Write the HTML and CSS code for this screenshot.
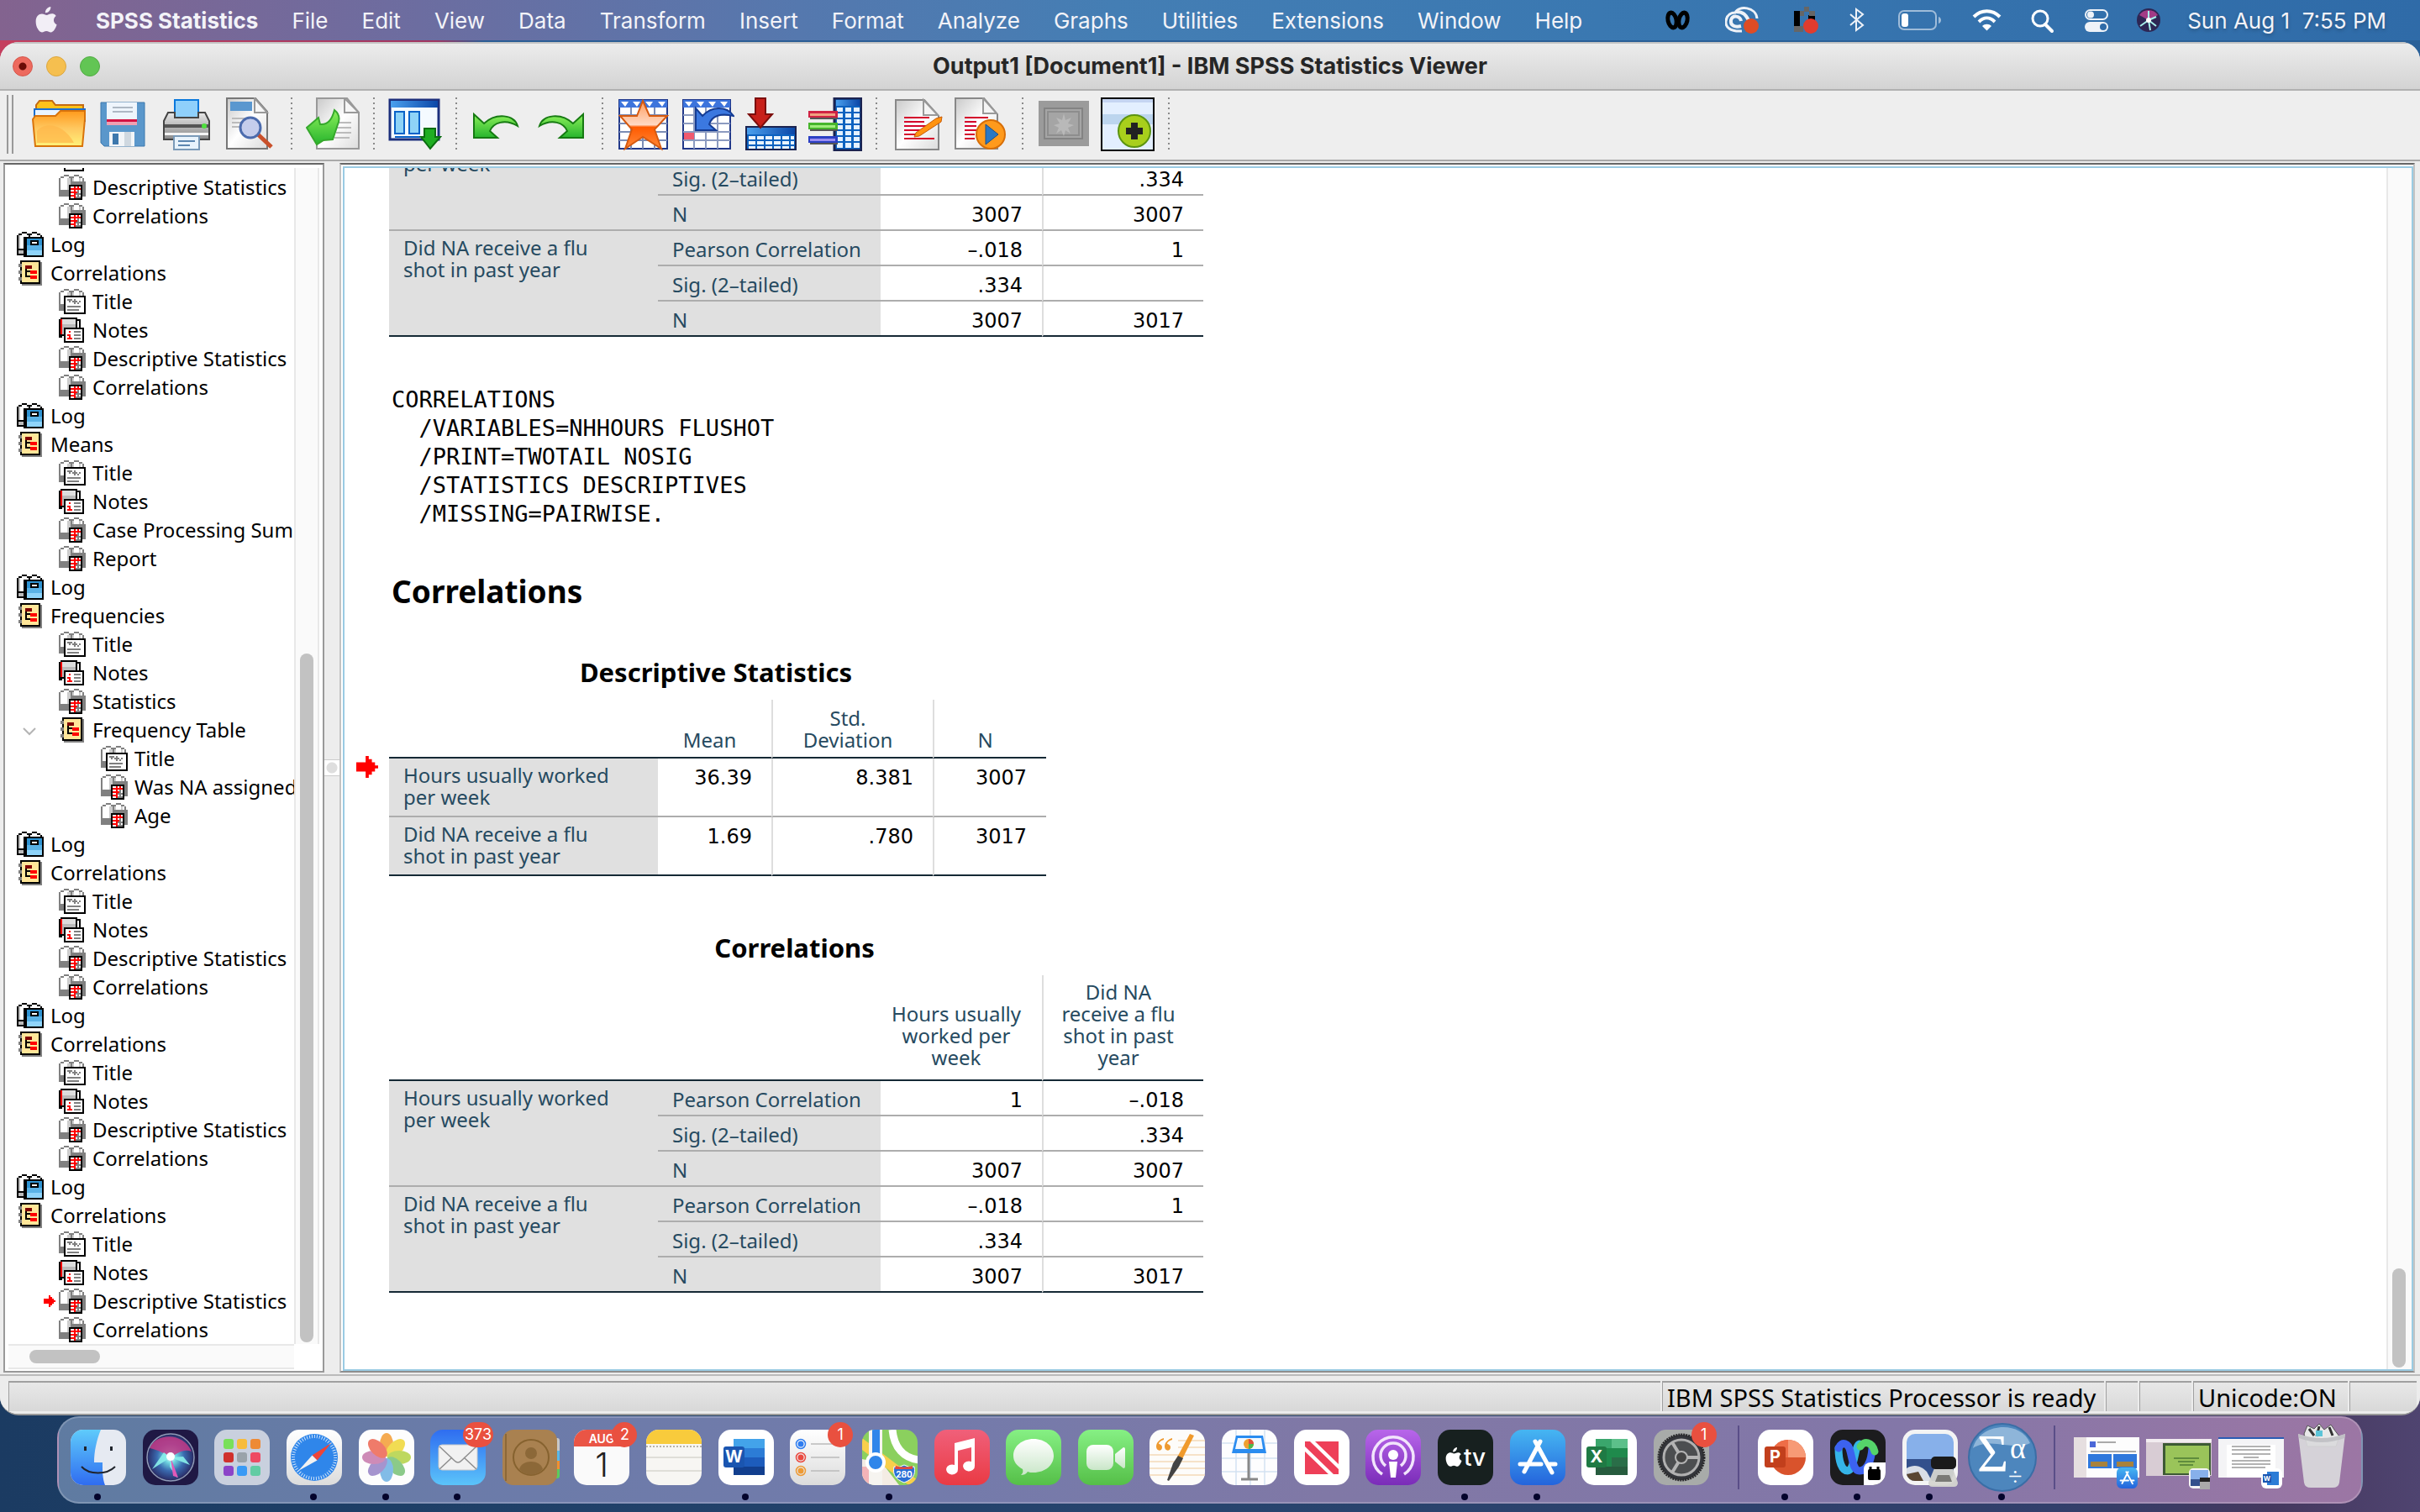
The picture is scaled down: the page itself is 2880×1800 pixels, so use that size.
FILE: index.html
```html
<!DOCTYPE html>
<html lang="en">
<head>
<meta charset="utf-8">
<title>Output1 [Document1] - IBM SPSS Statistics Viewer</title>
<link rel="stylesheet" href="styles.css">
</head>
<body>
<svg class="defs" aria-hidden="true">
  <defs>
    <linearGradient id="g-sheet" x1="0" y1="0" x2="1" y2="1"><stop offset="0" stop-color="#c9c9c9"/><stop offset=".5" stop-color="#fff"/><stop offset="1" stop-color="#dcdcdc"/></linearGradient>
    <linearGradient id="g-head" x1="0" x2="1"><stop offset="0" stop-color="#4aa0ee"/><stop offset="1" stop-color="#0b47a8"/></linearGradient>
    <linearGradient id="g-folder" x1="0" y1="0" x2="0" y2="1"><stop offset="0" stop-color="#ff9a1c"/><stop offset=".5" stop-color="#ffc860"/><stop offset="1" stop-color="#fff27a"/></linearGradient>
    <linearGradient id="g-green" x1="0" y1="0" x2="0" y2="1"><stop offset="0" stop-color="#8cf05a"/><stop offset="1" stop-color="#27b42d"/></linearGradient>
    <linearGradient id="g-gray" x1="0" y1="0" x2="0" y2="1"><stop offset="0" stop-color="#e8e8e8"/><stop offset="1" stop-color="#8a8a8a"/></linearGradient>
    <linearGradient id="g-star" x1="0" y1="0" x2="0" y2="1"><stop offset="0" stop-color="#ff9d5e"/><stop offset=".5" stop-color="#ffd9c4"/><stop offset=".55" stop-color="#ff5a00"/><stop offset="1" stop-color="#ff8a3a"/></linearGradient>
    <linearGradient id="g-white" x1="0" y1="0" x2="0" y2="1"><stop offset="0" stop-color="#fff"/><stop offset="1" stop-color="#dcdcdc"/></linearGradient>
    <linearGradient id="g-blue" x1="0" y1="0" x2="0" y2="1"><stop offset="0" stop-color="#2f6df0"/><stop offset="1" stop-color="#5bc4fa"/></linearGradient>
    <linearGradient id="g-finder" x1="0" y1="0" x2="0" y2="1"><stop offset="0" stop-color="#5fcbfb"/><stop offset="1" stop-color="#2f6cf0"/></linearGradient>
    <linearGradient id="g-music" x1="0" y1="0" x2="0" y2="1"><stop offset="0" stop-color="#f0607a"/><stop offset="1" stop-color="#ea3a44"/></linearGradient>
    <linearGradient id="g-pod" x1="0" y1="0" x2="0" y2="1"><stop offset="0" stop-color="#b866ea"/><stop offset="1" stop-color="#7a2cb8"/></linearGradient>
    <linearGradient id="g-bubble" x1="0" y1="0" x2="0" y2="1"><stop offset="0" stop-color="#fff"/><stop offset="1" stop-color="#c9e6c8"/></linearGradient>
    <linearGradient id="g-store" x1="0" y1="0" x2="0" y2="1"><stop offset="0" stop-color="#46b6f2"/><stop offset="1" stop-color="#2464dc"/></linearGradient>
    <linearGradient id="g-lime" x1="0" y1="0" x2="0" y2="1"><stop offset="0" stop-color="#86f084"/><stop offset="1" stop-color="#55bf48"/></linearGradient>
    <radialGradient id="g-siri" cx=".5" cy=".5" r=".5"><stop offset="0" stop-color="#fff"/><stop offset=".25" stop-color="#6fd6e0"/><stop offset=".6" stop-color="#3a6bb0"/><stop offset="1" stop-color="#2a2f6b"/></radialGradient>
    <symbol id="pages" viewBox="0 0 16 15">
      <path fill="#fff" d="M1 2h6v8H1zM8 2h6v2H8z"/>
      <path fill="#ccc" d="M5 2h2v7H5zM8 1h1v3H8zM12 2h1v2h-1z"/>
      <path fill="#808080" d="M0 2h1v10H0zM1 1h2v1H1zM3 0h3v1H3zM6 1h3v1H6zM7 2h1v3H7zM9 0h3v1H9zM12 1h2v1h-2zM14 2h1v2h-1zM0 9h6v4H0z"/>
    </symbol>
    <symbol id="i-table" viewBox="0 0 16 15">
      <use href="#pages"/>
      <path fill="#808080" d="M7 4h9v9H7z"/><path d="M6 6h8v9H6z"/><path fill="#fff" d="M7 7h6v7H7z"/>
      <path fill="red" d="M7 8h6v1H7zM7 10h4v1H7zM7 12h3v1H7zM9 7h1v7H9zM11 7h1v2h-1z"/>
      <path fill="#808080" d="M11 9h1v5h-1zM10 11h3v1h-3zM10 13h3v1h-3z"/>
    </symbol>
    <symbol id="i-title" viewBox="0 0 16 15">
      <use href="#pages"/>
      <path d="M3 4h13v11H3z"/><path fill="#fff" d="M4 5h11v9H4z"/>
      <path fill="#808080" d="M5 6h3v1H5zM6 7h1v1H6zM8 7h1v1H8zM9 6h1v3H9zM10 7h1v1h-1zM11 8h1v1h-1zM12 7h1v1h-1zM5 10h8v1H5zM5 12h7v1H5z"/>
    </symbol>
    <symbol id="i-notes" viewBox="0 0 16 15">
      <path d="M1 0h10v1h2v5H0V1h1zM0 6h3v6H0z"/><path fill="#ddd" d="M2 1h8v3H2z"/><path fill="#bbb" d="M2 4h8v2H2zM2 6h1v4H2z"/><path fill="#fff" d="M11 2h1v4h-1zM2 11h1v1H2z"/><path fill="red" d="M1 1h1v9H1z"/>
      <path d="M3 6h12v9H3z"/><path fill="#fff" d="M4 7h10v7H4z"/>
      <path fill="red" d="M6 8h1v1H6zM5 10h2v1H5zM6 10h1v3H6zM5 12h3v1H5z"/><path fill="#808080" d="M9 8h4v1H9zM9 10h4v1H9zM9 12h4v1H9z"/>
    </symbol>
    <symbol id="i-log" viewBox="0 0 16 15">
      <path fill="#fff" d="M1 1h13v9H1z"/><path fill="#bbb" d="M1 10h3v3H1zM1 2h1v8H1z"/>
      <path d="M0 2h1v11H0zM1 1h2v1H1zM3 0h3v1H3zM6 1h3v1H6zM9 0h3v1H9zM12 1h2v1h-2zM7 2h1v2H7zM14 2h1v2h-1zM0 10h4v1H0zM0 13h4v1H0zM4 3h12v12H4z"/>
      <path fill="#2f93d2" d="M6 4h9v4H6z"/><path fill="#5ab2e6" d="M6 8h9v3H6z"/><path fill="#8fd4fa" d="M6 11h9v3H6z"/><path d="M8 5h5v3H8z"/><path fill="#fff" d="M9 6h3v1H9z"/>
    </symbol>
    <symbol id="i-head" viewBox="0 0 16 15">
      <path fill="#808080" d="M3 1h12v14H3z"/><path d="M2 0h12v14H2z"/><path fill="#ffe699" d="M3 1h10v12H3z"/>
      <path fill="#808080" d="M1 2h2v2H1zM1 6h2v2H1zM1 10h2v2H1z"/>
      <path d="M5 3h1v7H5zM5 6h3v1H5zM5 9h3v1H5z"/><path fill="#800000" d="M5 3h4v2H5z"/><path fill="red" d="M8 6h4v2H8zM8 9h4v2H8z"/>
    </symbol>
    <symbol id="i-arrow" viewBox="0 0 14 14"><path fill="red" d="M0 4h6V0h2v2h2v2h2v2h2v2h-2v2h-2v2H8v2H6v-4H0z"/></symbol>
    <symbol id="apple" viewBox="0 0 24 30"><path d="M17 0c.3 3.600-2.600 7-6 6.800C10.600 3.500 13.700.4 17 0zM23 10.200c-3.700 2.300-3.400 8 .9 9.700-1.300 4-3.900 8.600-6.700 8.600-2 0-2.700-1.300-5-1.300s-3.100 1.300-5 1.300C3.600 28.500.3 22 .3 16.500c0-5.700 3.500-8.600 6.900-8.600 2.200 0 3.900 1.500 5.300 1.500 1.300 0 3.400-1.600 6-1.600 1 0 3.200.3 4.500 2.400z"/></symbol>
    <symbol id="a-logo" viewBox="0 0 66 66"><g fill="none" stroke="#fff" stroke-width="5" stroke-linecap="round"><path d="M36 14L17 50M30 14l20 37M12 41h25M46 41h8"/></g></symbol>
  </defs>
</svg>

<header class="menubar">
  <nav class="menus" aria-label="Application menus">
    <button class="menu" aria-label="Apple"><svg class="apple" viewBox="0 0 24 30"><use href="#apple" fill="#f2eef6"/></svg></button>
    <button class="menu menu-app">SPSS Statistics</button>
    <button class="menu">File</button><button class="menu">Edit</button><button class="menu">View</button><button class="menu">Data</button><button class="menu">Transform</button><button class="menu">Insert</button><button class="menu">Format</button><button class="menu">Analyze</button><button class="menu">Graphs</button><button class="menu">Utilities</button><button class="menu">Extensions</button><button class="menu">Window</button><button class="menu">Help</button>
  </nav>
  <div class="extras">
    <svg width="40" height="32" viewBox="0 0 40 32"><g fill="none" stroke="#000" stroke-width="5"><ellipse cx="9" cy="16" rx="5" ry="9" transform="rotate(-12 9 16)"/><ellipse cx="22" cy="16" rx="5" ry="9" transform="rotate(12 22 16)"/></g></svg>
    <svg width="50" height="32" viewBox="0 0 50 32"><path d="M20 29C6 30 0 24 1 17 2 9 8 7 12 7 16-2 37 0 38 14" fill="none" stroke="#eef2f8" stroke-width="3"/><path d="M19 23c-8 2-13-1-12-7 2-7 11-5 12 1M13 6c10 0 12 5 15 10" fill="none" stroke="#eef2f8" stroke-width="4"/><circle cx="31" cy="23" r="9" fill="#de4c25"/></svg>
    <svg width="32" height="32" viewBox="0 0 32 32"><path fill="#000" d="M0 5h7v21H0zM17 10h8v6h-8z"/><path fill="#666" d="M0 23h11v7H0zM7 5h5v6H7zM12 0h6v6h-6zM18 5h7v6h-7z"/><circle cx="20" cy="23" r="9" fill="#e03c2e"/></svg>
    <svg width="28" height="32" viewBox="0 0 28 32"><path d="M3 9l15 13-8 6V3l8 6L3 22" fill="none" stroke="#eef2f8" stroke-width="2"/></svg>
    <svg width="56" height="32" viewBox="0 0 56 32"><rect x="1" y="5" width="44" height="22" rx="6" fill="none" stroke="#9fbcd9" stroke-width="2"/><rect x="4" y="8" width="8" height="16" rx="3" fill="#fff"/><path d="M48 12c4 1 4 7 0 8z" fill="#9fbcd9"/></svg>
    <svg width="36" height="32" viewBox="0 0 36 32"><g fill="none" stroke="#fff" stroke-width="4"><path d="M2 12c9-9 22-9 31 0M8 18c6-6 13-6 19 0"/></g><path d="M12 23c3-3 8-3 11 0l-5.500 5.500z" fill="#fff"/></svg>
    <svg width="32" height="32" viewBox="0 0 32 32"><circle cx="13" cy="14" r="9" fill="none" stroke="#fff" stroke-width="3"/><path d="M19 21l8 8" stroke="#fff" stroke-width="4" stroke-linecap="round"/></svg>
    <svg width="32" height="32" viewBox="0 0 32 32"><rect x="3" y="4" width="26" height="11" rx="5.500" fill="none" stroke="#eef2f8" stroke-width="2"/><circle cx="9" cy="9.500" r="4" fill="#eef2f8"/><rect x="2" y="18" width="28" height="12" rx="6" fill="#eef2f8"/><circle cx="24" cy="24" r="4" fill="#2f6ba8"/></svg>
    <svg width="28" height="32" viewBox="0 0 28 32"><circle cx="14" cy="16" r="14" fill="#2d2654"/><path d="M3 10a13 13 0 0122 0l-11 6z" fill="#a33b86"/><path d="M14 16L4 23M14 16l9 7M14 16l2 12M14 16l9-4M14 16V5" stroke="#a6f0ea" stroke-width="2"/><circle cx="14" cy="16" r="3" fill="#fff"/></svg>
    <time class="clock">Sun Aug 1&nbsp; 7:55 PM</time>
  </div>
</header>

<main class="window">
  <div class="titlebar">
    <div class="lights"><button class="light close" aria-label="Close"></button><button class="light min" aria-label="Minimize"></button><button class="light zoom" aria-label="Zoom"></button></div>
    <h1 class="title">Output1 [Document1] - IBM SPSS Statistics Viewer</h1>
  </div>

  <div class="toolbar" role="toolbar" aria-label="Viewer tools">
    <span class="grip"></span>
    <button class="tool" aria-label="Open"><svg viewBox="0 0 64 64"><path d="M5 22V9l4-5h15l4 5h33v14z" fill="#ffc21a" stroke="#c46a12" stroke-width="2"/><path d="M3 14h60v14H3z" fill="#e9f4ff" stroke="#1a6fd0" stroke-width="2"/><path d="M1 26l3-4h24l6-6h29v10l-3 32H4z" fill="url(#g-folder)" stroke="#d9730a" stroke-width="2"/><path d="M6 40c10-12 32-8 44 14H6z" fill="#ffb648" opacity=".7"/></svg></button>
    <button class="tool" aria-label="Save"><svg viewBox="0 0 64 64"><path d="M6 6h52v52H10l-4-4z" fill="#5a97cb" stroke="#3d78ad"/><path d="M13 6h36v20H13z" fill="#eef5fc"/><path d="M20 11h24v2H20zM20 16h24v2H20z" fill="#aeb8c4"/><path d="M13 26h36v3H13z" fill="#d41243"/><path d="M13 29h36v4H13z" fill="#f0a0b2"/><path d="M16 41h30v17H16z" fill="#f2f5f8"/><path d="M20 43h7v13h-7z" fill="#3d78ad"/><path d="M34 41h8v17h-8z" fill="#cfd8e0"/></svg></button>
    <button class="tool" aria-label="Print"><svg viewBox="0 0 64 64"><path d="M18 3h28v22H18z" fill="#8fd0fb" stroke="#0a78dc" stroke-width="2"/><path d="M10 18h8v6h28v-6h8l5 10v22H5V28z" fill="url(#g-gray)" stroke="#444" stroke-width="2"/><path d="M6 32h52v4H6z" fill="#555"/><path d="M6 42h52v3H6z" fill="#f5f5f5"/><circle cx="53" cy="34" r="3" fill="#4de03c"/><path d="M17 46h30v16H17z" fill="#e8f3fc" stroke="#7a9ab8" stroke-width="2"/><path d="M22 51h20v2H22zM22 56h14v2H22z" fill="#5b86b0"/></svg></button>
    <button class="tool" aria-label="Print preview"><svg viewBox="0 0 64 64"><path d="M4 1h34l14 16v44H4z" fill="url(#g-sheet)" stroke="#777" stroke-width="2"/><path d="M37 1v17h15z" fill="#f6f6f6" stroke="#999" stroke-width="2"/><path d="M8 5h26v11H8z" fill="#5a97cf"/><path d="M10 24h20v2H10zM10 29h16v2H10zM10 34h14v2H10z" fill="#bbb"/><path d="M41 44l16 15" stroke="#c9502a" stroke-width="5"/><circle cx="32" cy="36" r="12" fill="#c5cdec" stroke="#4c6cae" stroke-width="3"/></svg></button>
    <span class="sep"></span>
    <button class="tool" aria-label="Export"><svg viewBox="0 0 64 64"><path d="M13 1h36l14 17v43H13z" fill="url(#g-sheet)" stroke="#999" stroke-width="2"/><path d="M46 1v17h17z" fill="#f6f6f6" stroke="#999" stroke-width="2"/><path d="M34 29h20v2H34zM36 35h18v2H36zM36 41h18v2H36zM34 47h18v2H34z" fill="#bbb"/><path d="M1 36l14-12 2 8c8 1 14-5 17-17 5 4 7 10 4 17l-6 18-11 1-8 5z" fill="url(#g-green)" stroke="#36a82c" stroke-width="2"/></svg></button>
    <span class="sep"></span>
    <button class="tool" aria-label="Recall recently used dialogs"><svg viewBox="0 0 64 64"><path d="M2 3h58v47H2z" fill="#f4faff" stroke="#1c2f7c" stroke-width="3"/><path d="M3 4h56v8H3z" fill="url(#g-head)"/><g fill="#8fd3f7" stroke="#0a62c8" stroke-width="2"><path d="M8 17h11v26H8zM25 17h12v26H25z"/></g><path d="M8 46h30v2H8z" fill="#0a62c8"/><path d="M43 37h13v10h6L50 61 39 47h4z" fill="#1fae22" stroke="#0b6e10" stroke-width="2"/></svg></button>
    <span class="sep"></span>
    <button class="tool" aria-label="Undo"><svg viewBox="0 0 64 64"><path d="M4 20v28h28l-9-8c4-10 18-15 33-6C52 20 30 18 16 31z" fill="url(#g-green)" stroke="#167a12" stroke-width="2"/></svg></button>
    <button class="tool" aria-label="Redo"><svg viewBox="0 0 64 64"><path d="M58 20v28H30l9-8C35 30 21 25 6 34c4-14 26-16 40-3z" fill="url(#g-green)" stroke="#167a12" stroke-width="2"/></svg></button>
    <span class="sep"></span>
    <button class="tool" aria-label="Go to data"><svg viewBox="0 0 64 64"><path d="M3 3h57v58H3z" fill="#fff" stroke="#22398a" stroke-width="2"/><path d="M3 3h57v9H3z" fill="#3d74dc"/><path d="M3 21h57M3 31h57M3 41h57M3 51h57M17 12v49M31 12v49M45 12v49" stroke="#7b8cb4" stroke-width="2"/><path d="M5 5h9l-4 6zM19 5h9l-4 6zM34 5h9l-4 6zM49 5h9l-4 6z" fill="#fff"/><path d="M31 4l8 18h21L45 38l8 23-22-14L10 61l8-23L4 22h20z" fill="url(#g-star)" stroke="#d65a10" stroke-width="2"/></svg></button>
    <button class="tool" aria-label="Go to case"><svg viewBox="0 0 64 64"><path d="M3 3h56v58H3z" fill="#fff" stroke="#22398a" stroke-width="2"/><path d="M3 3h56v9H3z" fill="#3d74dc"/><path d="M3 21h56M3 31h56M3 41h56M3 51h56M16 12v49M30 12v49M44 12v49" stroke="#8c9bc0" stroke-width="2"/><path d="M5 5h9l-4 6zM19 5h9l-4 6zM33 5h9l-4 6zM47 5h9l-4 6z" fill="#fff"/><path d="M4 42h12v8H4z" fill="#f05a6e"/><path d="M18 13v26h24l-8-7c3-10 14-14 29-10-8-12-26-12-37 0z" fill="#3b78e0" stroke="#153c94" stroke-width="2"/></svg></button>
    <button class="tool" aria-label="Go to variable"><svg viewBox="0 0 64 64"><path d="M2 35h59v27H2z" fill="#0c62c0" stroke="#1b2350" stroke-width="2"/><path d="M3 36h57v8H3z" fill="url(#g-head)"/><path d="M5 46h8v4H5zM15 46h8v4h-8zM25 46h8v4h-8zM35 46h8v4h-8zM45 46h8v4h-8zM55 46h4v4h-4zM5 52h8v4H5zM15 52h8v4h-8zM25 52h8v4h-8zM35 52h8v4h-8zM45 52h8v4h-8zM55 52h4v4h-4zM5 58h8v3H5zM15 58h8v3h-8zM25 58h8v3h-8zM35 58h8v3h-8zM45 58h8v3h-8zM55 58h4v3h-4z" fill="#e9f4ff"/><path d="M13 1h12v19h8L19 36 5 20h8z" fill="#c8201a" stroke="#7c0e0c" stroke-width="2"/></svg></button>
    <button class="tool" aria-label="Variables"><svg viewBox="0 0 64 64"><path d="M31 1h32v62H31z" fill="#0c62c0" stroke="#1b2350" stroke-width="3"/><path d="M33 3h28v7H33z" fill="url(#g-head)"/><path d="M34 12h7v5h-7zM44 12h7v5h-7zM54 12h7v5h-7zM34 19h7v5h-7zM44 19h7v5h-7zM54 19h7v5h-7zM34 26h7v5h-7zM44 26h7v5h-7zM54 26h7v5h-7zM34 33h7v5h-7zM44 33h7v5h-7zM54 33h7v5h-7zM34 40h7v5h-7zM44 40h7v5h-7zM54 40h7v5h-7zM34 47h7v5h-7zM44 47h7v5h-7zM54 47h7v5h-7zM34 54h7v6h-7zM44 54h7v6h-7zM54 54h7v6h-7z" fill="#e4f1ff"/><path d="M0 16h35v8H0z" fill="#d02244"/><path d="M2 19h30v3H2z" fill="#f0a080"/><path d="M0 30h35v8H0z" fill="#46b52c"/><path d="M2 33h30v3H2z" fill="#a0ee7c"/><path d="M0 46h35v8H0z" fill="#2b3fc4"/><path d="M2 49h30v3H2z" fill="#9a8cf0"/><path d="M2 24h33v2H2zM2 38h33v2H2zM2 54h33v2H2z" fill="#555"/></svg></button>
    <span class="sep"></span>
    <button class="tool" aria-label="Create or edit autoscript"><svg viewBox="0 0 64 64"><path d="M6 3h34l17 19v40H6z" fill="url(#g-sheet)" stroke="#888" stroke-width="2"/><path d="M39 3v18h17z" fill="#f4f4f4" stroke="#999" stroke-width="2"/><path d="M16 24h30M16 29h24M16 34h28M16 39h20M16 44h14M16 49h36" stroke="#d4062c" stroke-width="2"/><path d="M30 42l24-17 7-2-1 6-26 17-6 1z" fill="#ff9310" stroke="#c85a06" stroke-width="1"/></svg></button>
    <button class="tool" aria-label="Run script"><svg viewBox="0 0 64 64"><path d="M1 1h34l16 19v41H1z" fill="url(#g-sheet)" stroke="#888" stroke-width="2"/><path d="M34 1v18h16z" fill="#f4f4f4" stroke="#999" stroke-width="2"/><path d="M12 24h28M12 29h14M12 34h14M12 39h14M12 44h12M12 49h12" stroke="#d4062c" stroke-width="2"/><circle cx="43" cy="44" r="17" fill="#ff9a1c" stroke="#d86f08" stroke-width="2"/><path d="M37 32l15 12-15 12z" fill="#2a78c4" stroke="#1a4f8a"/></svg></button>
    <span class="sep"></span>
    <button class="tool" aria-label="Designate window" disabled><svg viewBox="0 0 64 64"><path d="M2 4h60v54H2z" fill="#9b9b9b"/><path d="M9 13h45v36H9z" fill="#a5a5a5" stroke="#838383" stroke-width="2"/><path d="M13 17h37v28H13z" fill="none" stroke="#8d8d8d" stroke-width="2"/><path d="M32 19l2 8 7-3-4 7 7 2-7 3 3 7-6-4-2 7-3-7-6 4 3-7-6-3 7-2-4-7 7 3z" fill="#b9b9b9"/></svg></button>
    <button class="tool" aria-label="Show all variables"><svg viewBox="0 0 64 64"><path d="M0 0h64v64H0z" fill="#000"/><path d="M2 2h60v60H2z" fill="#e3efff"/><path d="M2 2h60v4H2z" fill="#c5d5f2"/><path d="M2 20h60v12H2z" fill="#bcd5ee"/><circle cx="40" cy="40" r="19" fill="#a8cf1c" stroke="#5c9410" stroke-width="2"/><path d="M36 30h8v6h6v8h-6v6h-8v-6h-6v-8h6z" fill="#222"/></svg></button>
    <span class="sep"></span>
  </div>

  <div class="workspace">
    <aside class="outline" aria-label="Outline">
      <ul class="tree">
        <li class="row l1"><svg class="node" role="img" aria-label="Notes"><use href="#i-notes"/></svg></li>
        <li class="row l1"><svg class="node"><use href="#i-table"/></svg>Descriptive Statistics</li>
        <li class="row l1"><svg class="node"><use href="#i-table"/></svg>Correlations</li>
        <li class="row"><svg class="node"><use href="#i-log"/></svg>Log</li>
        <li class="row"><svg class="node"><use href="#i-head"/></svg>Correlations</li>
        <li class="row l1"><svg class="node"><use href="#i-title"/></svg>Title</li>
        <li class="row l1"><svg class="node"><use href="#i-notes"/></svg>Notes</li>
        <li class="row l1"><svg class="node"><use href="#i-table"/></svg>Descriptive Statistics</li>
        <li class="row l1"><svg class="node"><use href="#i-table"/></svg>Correlations</li>
        <li class="row"><svg class="node"><use href="#i-log"/></svg>Log</li>
        <li class="row"><svg class="node"><use href="#i-head"/></svg>Means</li>
        <li class="row l1"><svg class="node"><use href="#i-title"/></svg>Title</li>
        <li class="row l1"><svg class="node"><use href="#i-notes"/></svg>Notes</li>
        <li class="row l1"><svg class="node"><use href="#i-table"/></svg>Case Processing Summary</li>
        <li class="row l1"><svg class="node"><use href="#i-table"/></svg>Report</li>
        <li class="row"><svg class="node"><use href="#i-log"/></svg>Log</li>
        <li class="row"><svg class="node"><use href="#i-head"/></svg>Frequencies</li>
        <li class="row l1"><svg class="node"><use href="#i-title"/></svg>Title</li>
        <li class="row l1"><svg class="node"><use href="#i-notes"/></svg>Notes</li>
        <li class="row l1"><svg class="node"><use href="#i-table"/></svg>Statistics</li>
        <li class="row l1"><svg class="chev" viewBox="0 0 16 10"><path d="M1 1l7 7 7-7" fill="none" stroke="#b4b4b4" stroke-width="2"/></svg><svg class="node"><use href="#i-head"/></svg>Frequency Table</li>
        <li class="row l2"><svg class="node"><use href="#i-title"/></svg>Title</li>
        <li class="row l2"><svg class="node"><use href="#i-table"/></svg>Was NA assigned</li>
        <li class="row l2"><svg class="node"><use href="#i-table"/></svg>Age</li>
        <li class="row"><svg class="node"><use href="#i-log"/></svg>Log</li>
        <li class="row"><svg class="node"><use href="#i-head"/></svg>Correlations</li>
        <li class="row l1"><svg class="node"><use href="#i-title"/></svg>Title</li>
        <li class="row l1"><svg class="node"><use href="#i-notes"/></svg>Notes</li>
        <li class="row l1"><svg class="node"><use href="#i-table"/></svg>Descriptive Statistics</li>
        <li class="row l1"><svg class="node"><use href="#i-table"/></svg>Correlations</li>
        <li class="row"><svg class="node"><use href="#i-log"/></svg>Log</li>
        <li class="row"><svg class="node"><use href="#i-head"/></svg>Correlations</li>
        <li class="row l1"><svg class="node"><use href="#i-title"/></svg>Title</li>
        <li class="row l1"><svg class="node"><use href="#i-notes"/></svg>Notes</li>
        <li class="row l1"><svg class="node"><use href="#i-table"/></svg>Descriptive Statistics</li>
        <li class="row l1"><svg class="node"><use href="#i-table"/></svg>Correlations</li>
        <li class="row"><svg class="node"><use href="#i-log"/></svg>Log</li>
        <li class="row"><svg class="node"><use href="#i-head"/></svg>Correlations</li>
        <li class="row l1"><svg class="node"><use href="#i-title"/></svg>Title</li>
        <li class="row l1"><svg class="node"><use href="#i-notes"/></svg>Notes</li>
        <li class="row l1"><svg class="here"><use href="#i-arrow"/></svg><svg class="node"><use href="#i-table"/></svg>Descriptive Statistics</li>
        <li class="row l1"><svg class="node"><use href="#i-table"/></svg>Correlations</li>
      </ul>
      <div class="vtrack"><div class="vthumb"></div></div>
      <div class="htrack"><div class="hthumb"></div></div>
    </aside>
    <div class="splitter"><span class="knob"></span></div>
    <section class="viewer" aria-label="Output">
      <div class="report">
        <table class="pivot scrolled">
          <colgroup><col class="c-label"><col class="c-stat"><col class="c-wide"><col class="c-wide"></colgroup>
          <tbody>
            <tr><th rowspan="3" scope="rowgroup">Hours usually worked per week</th><th class="stat" scope="row">Pearson Correlation</th><td>1</td><td>–.018</td></tr>
            <tr><th class="stat" scope="row">Sig. (2–tailed)</th><td></td><td>.334</td></tr>
            <tr><th class="stat" scope="row">N</th><td>3007</td><td>3007</td></tr>
            <tr><th class="last" rowspan="3" scope="rowgroup">Did NA receive a flu shot in past year</th><th class="stat" scope="row">Pearson Correlation</th><td>–.018</td><td>1</td></tr>
            <tr><th class="stat" scope="row">Sig. (2–tailed)</th><td>.334</td><td></td></tr>
            <tr class="end"><th class="stat" scope="row">N</th><td>3007</td><td>3017</td></tr>
          </tbody>
        </table>
        <pre class="log">CORRELATIONS
  /VARIABLES=NHHOURS FLUSHOT
  /PRINT=TWOTAIL NOSIG
  /STATISTICS DESCRIPTIVES
  /MISSING=PAIRWISE.</pre>
        <h2 class="heading">Correlations</h2>
        <div class="item">
          <svg class="marker"><use href="#i-arrow"/></svg>
          <table class="pivot">
            <caption>Descriptive Statistics</caption>
            <colgroup><col class="c-label"><col class="c-narrow"><col class="c-wide"><col class="c-narrow"></colgroup>
            <thead><tr class="short"><td class="corner"></td><th scope="col">Mean</th><th scope="col">Std.<br>Deviation</th><th scope="col">N</th></tr></thead>
            <tbody class="tall">
              <tr><th scope="row">Hours usually worked per week</th><td>36.39</td><td>8.381</td><td>3007</td></tr>
              <tr class="end"><th scope="row">Did NA receive a flu shot in past year</th><td>1.69</td><td>.780</td><td>3017</td></tr>
            </tbody>
          </table>
        </div>
        <div class="item">
          <table class="pivot">
            <caption>Correlations</caption>
            <colgroup><col class="c-label"><col class="c-stat"><col class="c-wide"><col class="c-wide"></colgroup>
            <thead><tr class="high"><td class="corner" colspan="2"></td><th scope="col">Hours usually worked per week</th><th scope="col">Did NA receive a flu shot in past year</th></tr></thead>
            <tbody>
              <tr><th rowspan="3" scope="rowgroup">Hours usually worked per week</th><th class="stat" scope="row">Pearson Correlation</th><td>1</td><td>–.018</td></tr>
              <tr><th class="stat" scope="row">Sig. (2–tailed)</th><td></td><td>.334</td></tr>
              <tr><th class="stat" scope="row">N</th><td>3007</td><td>3007</td></tr>
              <tr><th class="last" rowspan="3" scope="rowgroup">Did NA receive a flu shot in past year</th><th class="stat" scope="row">Pearson Correlation</th><td>–.018</td><td>1</td></tr>
              <tr><th class="stat" scope="row">Sig. (2–tailed)</th><td>.334</td><td></td></tr>
              <tr class="end"><th class="stat" scope="row">N</th><td>3007</td><td>3017</td></tr>
            </tbody>
          </table>
        </div>
      </div>
      <div class="vtrack main-track"><div class="vthumb"></div></div>
    </section>
  </div>

  <footer class="status">
    <span class="cell grow"></span><span class="cell s-proc">IBM SPSS Statistics Processor is ready</span><span class="cell s-a"></span><span class="cell s-b"></span><span class="cell s-uni">Unicode:ON</span><span class="cell s-end"></span>
  </footer>
</main>

<nav class="dock" aria-label="Dock">
  <div class="apps">
    <button class="app on" aria-label="Finder"><svg viewBox="0 0 66 66"><rect width="66" height="66" rx="15" fill="#e6eaf2"/><path d="M36 0H15A15 15 0 000 15v36a15 15 0 0015 15h26c-3-8-3-16-3-27H28C28 26 31 12 36 0z" fill="url(#g-finder)"/><path d="M17.500 20v5M48.500 20v5" stroke="#20242c" stroke-width="3"/><path d="M13 44c9 10 30 10 40 0" fill="none" stroke="#20242c" stroke-width="2"/></svg></button>
    <button class="app" aria-label="Siri"><svg viewBox="0 0 66 66"><rect width="66" height="66" rx="15" fill="#1f1844"/><circle cx="33" cy="33" r="27" fill="url(#g-siri)"/><path d="M8 22C15 4 48 2 58 26c-9-4-17 2-25 7-9-6-16-9-25-11z" fill="#c43a86" opacity=".85"/><path d="M33 33L11 47l14-20zM33 33l8 25-9-14zM33 33l23 9-8-10z" fill="#8af0ea" opacity=".9"/><path d="M33 33l9 24-6-2z" fill="#e05ab8"/><circle cx="33" cy="32" r="5" fill="#fff"/><circle cx="33" cy="33" r="28" fill="none" stroke="#8f9bb8" stroke-width="1.500"/></svg></button>
    <button class="app" aria-label="Launchpad"><svg viewBox="0 0 66 66"><rect width="66" height="66" rx="15" fill="#c9d0de"/><g><rect x="11" y="11" width="12" height="12" rx="3" fill="#78e05a"/><rect x="27" y="11" width="12" height="12" rx="3" fill="#f7bc3c"/><rect x="43" y="11" width="12" height="12" rx="3" fill="#ee8a35"/><rect x="11" y="27" width="12" height="12" rx="3" fill="#d0302c"/><rect x="27" y="27" width="12" height="12" rx="3" fill="#9aa3aa"/><rect x="43" y="27" width="12" height="12" rx="3" fill="#ee4a62"/><rect x="11" y="43" width="12" height="12" rx="3" fill="#8c44c8"/><rect x="27" y="43" width="12" height="12" rx="3" fill="#3a9af5"/><rect x="43" y="43" width="12" height="12" rx="3" fill="#62cca4"/></g></svg></button>
    <button class="app on" aria-label="Safari"><svg viewBox="0 0 66 66"><rect width="66" height="66" rx="15" fill="url(#g-white)"/><circle cx="33" cy="33" r="28" fill="#2f86ea"/><circle cx="33" cy="33" r="25" fill="none" stroke="#cfe4fb" stroke-width="4" stroke-dasharray="1 2"/><path d="M53 16L36.500 36.500l-6-6z" fill="#ee4438"/><path d="M14 49l16.500-18.500 6 6z" fill="#f2f2f2"/></svg></button>
    <button class="app on" aria-label="Photos"><svg viewBox="0 0 66 66"><rect width="66" height="66" rx="15" fill="#fdfdfd"/><g opacity=".88"><ellipse cx="33" cy="18" rx="8" ry="14" fill="#f4a03a"/><ellipse cx="33" cy="18" rx="8" ry="14" fill="#f0d83c" transform="rotate(45 33 33)"/><ellipse cx="33" cy="18" rx="8" ry="14" fill="#b6d44a" transform="rotate(90 33 33)"/><ellipse cx="33" cy="18" rx="8" ry="14" fill="#7cc47a" transform="rotate(135 33 33)"/><ellipse cx="33" cy="18" rx="8" ry="14" fill="#72b4e4" transform="rotate(180 33 33)"/><ellipse cx="33" cy="18" rx="8" ry="14" fill="#9a86c8" transform="rotate(225 33 33)"/><ellipse cx="33" cy="18" rx="8" ry="14" fill="#c87cae" transform="rotate(270 33 33)"/><ellipse cx="33" cy="18" rx="8" ry="14" fill="#ee6a56" transform="rotate(315 33 33)"/></g></svg></button>
    <button class="app on" aria-label="Mail"><svg viewBox="0 0 66 66"><rect width="66" height="66" rx="15" fill="url(#g-blue)"/><rect x="10" y="18" width="46" height="30" rx="4" fill="#f1f1f1" stroke="#c9c9c9"/><path d="M11 20l18 17q4 4 8 0l18-17M11 47l15-14M55 47L40 33" fill="none" stroke="#8e8e8e" stroke-width="1.500"/></svg><span class="badge">373</span></button>
    <button class="app" aria-label="Contacts"><svg viewBox="0 0 66 66"><path d="M60 10h6a3 3 0 012 3v12h-8z" fill="#c8c8c8"/><path d="M60 25h8v12h-8z" fill="#58b8e8"/><path d="M60 37h8v10h-8z" fill="#f09030"/><path d="M60 47h8v8a3 3 0 01-3 3h-5z" fill="#5ccc5c"/><rect width="65" height="66" rx="13" fill="#a98150"/><path d="M4 5v56" stroke="#8c6838" stroke-width="2"/><g fill="none" stroke="#86622f" stroke-width="2"><circle cx="34" cy="33" r="21"/></g><circle cx="34" cy="28" r="7" fill="#8c6838"/><path d="M20 47c3-12 25-12 28 0-8 9-20 9-28 0z" fill="#8c6838"/></svg></button>
    <button class="app" aria-label="Calendar"><svg viewBox="0 0 66 66"><rect width="66" height="66" rx="15" fill="#fafafa"/><path d="M0 20v-5A15 15 0 0115 0h36a15 15 0 0115 15v5z" fill="#ea5545"/><text x="33" y="16" class="t-cal-m">AUG</text><text x="33" y="56" class="t-cal-d">1</text></svg><span class="badge">2</span></button>
    <button class="app" aria-label="Notes"><svg viewBox="0 0 66 66"><rect width="66" height="66" rx="15" fill="#f7f6f3"/><path d="M0 17v-2A15 15 0 0115 0h36a15 15 0 0115 15v2z" fill="#f8cb3c"/><path d="M0 20h66" stroke="#b8b4aa" stroke-width="2" stroke-dasharray="2 2"/><path d="M0 33h66M0 49h66" stroke="#d8d6d0" stroke-width="1.500"/></svg></button>
    <button class="app on" aria-label="Word"><svg viewBox="0 0 66 66"><rect width="66" height="66" rx="15" fill="#fff"/><path d="M18 11h37v11H18z" fill="#43a3ea"/><path d="M18 22h37v11H18z" fill="#2c7cd6"/><path d="M18 33h37v11H18z" fill="#1d5cbc"/><path d="M18 44h37v10H18z" fill="#123f8e"/><rect x="6" y="20" width="25" height="25" rx="3" fill="#1a55b0"/><text x="18.500" y="39" class="t-letter">W</text></svg></button>
    <button class="app" aria-label="Reminders"><svg viewBox="0 0 66 66"><rect width="66" height="66" rx="15" fill="url(#g-white)"/><path d="M25 17h34M25 33h34M25 49h34" stroke="#bbb" stroke-width="1.500"/><g stroke-width="1.500" fill="none"><circle cx="13" cy="17" r="5.500" stroke="#2f7df0"/><circle cx="13" cy="33" r="5.500" stroke="#ea4a40"/><circle cx="13" cy="49" r="5.500" stroke="#ee9a34"/></g><circle cx="13" cy="17" r="3.500" fill="#2f7df0"/><circle cx="13" cy="33" r="3.500" fill="#ea4a40"/><circle cx="13" cy="49" r="3.500" fill="#ee9a34"/></svg><span class="badge">1</span></button>
    <button class="app on" aria-label="Maps"><svg viewBox="0 0 66 66"><clipPath id="r"><rect width="66" height="66" rx="15"/></clipPath><g clip-path="url(#r)"><path d="M0 0h66v66H0z" fill="#8bd05e"/><path d="M0 35l24 5 20 26H0z" fill="#f4ece4"/><path d="M0 44h10v22H0z" fill="#f3b3b8"/><path d="M0 10l66 50v14L0 24z" fill="#f8cf4c"/><path d="M36 0c2 22 14 34 32 36" fill="none" stroke="#fff" stroke-width="9"/><path d="M8 0h16v66H8z" fill="#f6f4f0"/><path d="M12 0h9v34h-9z" fill="#2f86ea"/></g><circle cx="16" cy="39" r="10" fill="#2f86ea" stroke="#fff" stroke-width="4"/><path d="M38 44q6 2 12-2 6 4 12 2c2 10-2 15-12 19-10-4-14-9-12-19z" fill="#2a6fd6" stroke="#fff"/><path d="M40 43q10 3 20 0v4H39z" fill="#e0483e"/><text x="50" y="57" class="t-280">280</text></svg></button>
    <button class="app" aria-label="Music"><svg viewBox="0 0 66 66"><rect width="66" height="66" rx="15" fill="url(#g-music)"/><path d="M24 16l24-6v33a7 6 0 11-4-5V21l-16 4v22a7 6 0 11-4-5z" fill="#fff"/></svg></button>
    <button class="app" aria-label="Messages"><svg viewBox="0 0 66 66"><rect width="66" height="66" rx="15" fill="url(#g-lime)"/><path d="M33 11c14 0 24 9 24 20S47 51 33 51c-3 0-5 0-7-1-2 3-5 4-8 4 2-2 3-4 2-7C13 43 9 38 9 31c0-11 10-20 24-20z" fill="url(#g-bubble)"/></svg></button>
    <button class="app" aria-label="FaceTime"><svg viewBox="0 0 66 66"><rect width="66" height="66" rx="15" fill="url(#g-lime)"/><rect x="10" y="18" width="32" height="30" rx="8" fill="url(#g-bubble)"/><path d="M44 29l10-8q2 0 2 2v21q0 2-2 2l-10-8z" fill="url(#g-bubble)"/></svg></button>
    <button class="app" aria-label="Pages"><svg viewBox="0 0 66 66"><rect width="66" height="66" rx="15" fill="#fdfcfa"/><path d="M34 13h32M0 30h66M0 38h66M0 46h66M0 54h66M34 21h32" stroke="#f3d9b8" stroke-width="1.500"/><path d="M17 10c-6 2-9 6-9 10 0 6 7 6 7 1 0-3-3-4-4-4 0-2 2-4 6-5zM27 10c-6 2-9 6-9 10 0 6 7 6 7 1 0-3-3-4-4-4 0-2 2-4 6-5z" fill="#ee9a30"/><path d="M48 5l5 2-18 36-6-3z" fill="#f09a2c"/><path d="M34 31l-6 9-7 20 2 1 12-17 5-10z" fill="#444"/></svg></button>
    <button class="app" aria-label="Keynote"><svg viewBox="0 0 66 66"><rect width="66" height="66" rx="15" fill="#fdfdfe"/><path d="M0 16h66M0 34h66M0 50h66M17 0v66M34 0v66M51 0v66" stroke="#d4e2f2" stroke-width="1.500"/><path d="M17 7h32l4 21H12z" fill="#2a8cf0"/><path d="M19 10h28l2 13H16z" fill="#f2f8ff"/><circle cx="32" cy="17" r="6" fill="#f0a030"/><path d="M32 11a6 6 0 016 6h-6z" fill="#e0503c"/><path d="M32 17h6a6 6 0 01-6 6z" fill="#4cb84c"/><path d="M32 28v30M23 59h20" stroke="#888" stroke-width="3"/></svg></button>
    <button class="app" aria-label="News"><svg viewBox="0 0 66 66"><rect width="66" height="66" rx="15" fill="#fff"/><path d="M13 26l28 27H13zM25 14h28v27zM13 14h6l34 33v6h-6L13 20z" fill="#ee3f58"/></svg></button>
    <button class="app" aria-label="Podcasts"><svg viewBox="0 0 66 66"><rect width="66" height="66" rx="15" fill="url(#g-pod)"/><g fill="none" stroke="#f2e4fc" stroke-width="3.500"><path d="M20 53a24 24 0 1126 0M24 43a15 15 0 1118 0"/></g><circle cx="33" cy="30" r="6" fill="#fff"/><path d="M28 38h10l-2 19h-6z" fill="#fff"/></svg></button>
    <button class="app on" aria-label="TV"><svg viewBox="0 0 66 66"><rect width="66" height="66" rx="15" fill="#17201f"/><use href="#apple" x="9" y="21" width="20" height="24" fill="#fff"/><text x="44" y="43" class="t-tv">tv</text></svg></button>
    <button class="app on" aria-label="App Store"><svg viewBox="0 0 66 66"><rect width="66" height="66" rx="15" fill="url(#g-store)"/><use href="#a-logo"/></svg></button>
    <button class="app" aria-label="Excel"><svg viewBox="0 0 66 66"><rect width="66" height="66" rx="15" fill="#fff"/><path d="M17 11h38v43H17z" fill="#1f8a4c"/><path d="M36 11h19v11H36z" fill="#5cc08a"/><path d="M17 11h19v11H17z" fill="#3aa66c"/><path d="M36 33h19v21H36z" fill="#2a6e48"/><path d="M17 44h38v10H17z" fill="#275c3e"/><rect x="6" y="20" width="24" height="25" rx="3" fill="#1f7a44"/><text x="18" y="39" class="t-letter">X</text></svg></button>
    <button class="app" aria-label="System Preferences"><svg viewBox="0 0 66 66"><rect width="66" height="66" rx="15" fill="#a8aba9"/><circle cx="33" cy="33" r="27" fill="#33353a" stroke="#2a2a2c" stroke-width="3" stroke-dasharray="2 1"/><circle cx="33" cy="33" r="21" fill="#4c4e50" stroke="#b0b0b0" stroke-width="3"/><path d="M33 33L22 15M33 33L22 51M33 33h20" stroke="#b4b4b4" stroke-width="4"/><circle cx="33" cy="33" r="7" fill="#444" stroke="#b4b4b4" stroke-width="2"/></svg><span class="badge">1</span></button>
  </div>
  <span class="bar"></span>
  <div class="recent">
    <button class="app on" aria-label="PowerPoint"><svg viewBox="0 0 66 66"><rect width="66" height="66" rx="15" fill="#fff"/><circle cx="36" cy="33" r="21" fill="#d9532c"/><path d="M36 12a21 21 0 0121 21H36z" fill="#f79a76"/><path d="M36 12a21 21 0 00-21 21h21z" fill="#ee6d47"/><rect x="8" y="20" width="25" height="25" rx="3" fill="#c23f1c"/><text x="20.500" y="39" class="t-letter">P</text></svg></button>
    <button class="app on" aria-label="Webex"><svg viewBox="0 0 66 66"><rect width="66" height="66" rx="15" fill="#1c1c1e"/><g fill="none" stroke-width="9" stroke-linecap="round"><path d="M10 22c0 16 4 27 11 27 8 0 8-30 14-32" stroke="#35b4e8"/><path d="M10 22c4-9 12-6 14 4 3 12 4 23 11 23 9 0 14-12 15-27" stroke="#3c62f0"/><path d="M36 20c4-7 14-6 17 6" stroke="#55d46a"/></g><path d="M40 66V47a8 8 0 018-8h18v12a15 15 0 01-15 15z" fill="#fff"/><rect x="45" y="47" width="15" height="13" rx="2"/><path d="M48 44v4M57 44v4" stroke="#000" stroke-width="3"/></svg></button>
    <button class="app on" aria-label="Preview"><svg viewBox="0 0 66 66"><rect width="66" height="66" rx="15" fill="#f4f4f4"/><rect x="5" y="5" width="56" height="56" rx="10" fill="#87b0ea"/><path d="M5 35h56v16a10 10 0 01-10 10H15A10 10 0 015 51z" fill="#33508c"/><path d="M5 46c10-6 18-2 24 4l6 11H15A10 10 0 015 51z" fill="#d8dde6"/><path d="M5 53l14-3 6 11H15A10 10 0 015 53z" fill="#5a4632"/><path d="M38 46h22l6 17q0 5-5 5H36q-5 0-5-5z" fill="#d5d5d0" opacity=".95"/><rect x="34" y="32" width="30" height="15" rx="5" fill="#1a1a1a"/><path d="M42 54h14l3 8H39z" fill="#7a7a76"/></svg></button>
    <button class="app on" aria-label="SPSS Statistics"><svg class="spss" viewBox="0 0 82 82"><circle cx="41" cy="41" r="40" fill="#4d86bd" stroke="#3a6ea6" stroke-width="2"/><path d="M6 30C14 0 62-4 74 24 56 34 26 16 6 30z" fill="#a9c9e6" opacity=".7"/><text x="11" y="58" class="t-sigma">Σ</text><text x="50" y="42" class="t-alpha">α</text><text x="48" y="74" class="t-div">÷</text></svg></button>
  </div>
  <span class="bar"></span>
  <div class="shelf">
    <button class="mini" aria-label="App Store window"><svg viewBox="0 0 78 66"><path d="M0 9h78v48H0z" fill="#fdfdfd"/><path d="M0 9h15v48H0z" fill="#e6dfe0"/><path d="M19 14h7v7h-7z" fill="#4c68d8"/><path d="M28 14h22v2H28zM20 25h54v2H20z" fill="#aaa"/><path d="M17 29h28v17H17zM47 29h28v17H47z" fill="#2f78dc"/><path d="M20 38h20v6H20zM51 38h20v6H51z" fill="#a8823c"/><rect x="51" y="45" width="25" height="25" rx="6" fill="url(#g-store)"/><use href="#a-logo" x="51" y="45" width="25" height="25"/></svg></button>
    <button class="mini" aria-label="Preview window"><svg viewBox="0 0 78 66"><path d="M0 11h78v44H0z" fill="#d8ccd4"/><path d="M0 11h78v4H0z" fill="#f2ecf0"/><path d="M20 16h57v38H20z" fill="#3c5a34"/><path d="M23 19h52v33H23z" fill="#9ac45a"/><path d="M33 34h30M38 38h20M40 42h16" stroke="#4c7a34" stroke-width="1.500"/><rect x="51" y="46" width="25" height="24" rx="5" fill="#f4f4f4"/><path d="M53 48h21v11H53z" fill="#87b0ea"/><path d="M53 59h21v8H53z" fill="#33508c"/><path d="M64 58h12v13H64z" fill="#aaa"/><path d="M64 57h12v5H64z" fill="#222"/></svg></button>
    <button class="mini" aria-label="Word window"><svg viewBox="0 0 78 66"><path d="M0 9h78v48H0z" fill="#f4f4f6"/><path d="M0 9h78v2H0z" fill="#2a5cb4"/><path d="M10 18h58v39H10z" fill="#fff"/><path d="M16 20h46M16 24h46M16 29h46M30 33h18M16 37h46M16 41h46M16 45h40" stroke="#999" stroke-width="1.500"/><rect x="51" y="46" width="25" height="24" rx="6" fill="#fff"/><path d="M58 50h14v16H58z" fill="#2c7cd6"/><rect x="53" y="53" width="10" height="10" fill="#1a55b0"/><text x="58" y="61" class="t-mini">W</text></svg></button>
    <button class="trash" aria-label="Trash"><svg viewBox="0 0 58 80"><path d="M8 14l4-10 8 4 6-6 6 7 8-6 4 6 6 8-4 12H12z" fill="#e9e9e9" stroke="#555"/><path d="M14 8l6 8M26 5l-3 12M38 6l4 10" stroke="#333" stroke-width="3"/><path d="M22 10h8v7h-8z" fill="#5cc4d8"/><path d="M1 14q28 10 56 0l-7 58q-1 6-8 6H16q-7 0-8-6z" fill="#d9d9dc" opacity=".93"/><path d="M1 14q28 10 56 0l-1 5q-27 10-54 0z" fill="#bcbcc0" opacity=".8"/></svg></button>
  </div>
</nav>
</body>
</html>
```
FILE: styles.css
```css
* { box-sizing: border-box; }
html, body { margin: 0; height: 100%; }
body {
  display: flex;
  flex-direction: column;
  overflow: hidden;
  font-family: "Noto Sans", sans-serif;
  font-size: 24px;
  color: #000;
  background:
    linear-gradient(90deg, #c43f5e 0, #a03560 18%, #2a5c94 20%, #2a6098 100%) 0 0 / 100% 120px no-repeat,
    linear-gradient(90deg, #1b3b62 0, #1f4068 20%, #27446e 50%, #323f6b 85%, #45385f 94%, #4f4470 100%);
}
button { border: 0; padding: 0; background: none; font: inherit; color: inherit; }
.defs { position: absolute; width: 0; height: 0; }

/* menu bar */
.menubar {
  flex: none;
  height: 48px;
  display: flex;
  justify-content: space-between;
  align-items: center;
  padding: 0 40px 0 42px;
  font-family: Inter, sans-serif;
  font-size: 26px;
  color: #f3f3f8;
  background: linear-gradient(90deg, #83638f 0, #6e6c9f 16%, #5578ae 33%, #447eb4 46%, #3a78b1 66%, #2f6ba8 100%);
  text-shadow: 0 2px 4px rgba(0, 0, 0, .25);
}
.menus { display: flex; align-items: center; gap: 40px; }
.menu { display: flex; white-space: nowrap; }
.menu-app { font-weight: 700; }
.apple { width: 26px; height: 32px; margin-right: 6px; }
.extras { display: flex; align-items: center; gap: 32px; }
.clock { white-space: nowrap; }

/* window frame */
.window {
  flex: 1;
  min-height: 0;
  margin: 2px 0 1px;
  display: flex;
  flex-direction: column;
  background: #ededed;
  border-radius: 22px;
  border-bottom: 2px solid #999;
  overflow: hidden;
}
.titlebar {
  flex: none;
  height: 58px;
  display: grid;
  grid-template-columns: 1fr auto 1fr;
  align-items: center;
  padding: 0 15px;
  border-top: 2px solid #c4c4c4;
  border-bottom: 2px solid #b0b0b0;
  background: linear-gradient(#ececec, #d3d3d3);
}
.lights { display: flex; gap: 16px; }
.light { width: 24px; height: 24px; border-radius: 50%; border: 1px solid; }
.close { background: radial-gradient(circle, #6b0c06 0 4px, #ed6a5e 5px); border-color: #d5554a; }
.min { background: #f5bf4f; border-color: #dba63f; }
.zoom { background: #62c554; border-color: #52ab45; }
.title { margin: 0; font: 700 27px/32px Inter, sans-serif; color: #262626; }

.toolbar {
  flex: none;
  height: 84px;
  display: flex;
  align-items: center;
  gap: 12px;
  padding: 0 8px 2px;
  border-bottom: 2px solid #a9a9a9;
  background: #eee;
}
.grip { width: 8px; height: 70px; margin-right: 10px; border: solid #999; border-width: 0 2px; }
.tool { width: 64px; height: 64px; }
.tool svg { display: block; width: 64px; height: 64px; }
.sep {
  width: 2px;
  height: 64px;
  margin: 0 4px;
  background: repeating-linear-gradient(#8a8a8a 0 2px, transparent 2px 6px);
}

.workspace { flex: 1; min-height: 0; display: flex; padding: 2px 6px 2px 4px; }

/* outline pane */
.outline {
  flex: none;
  width: 382px;
  display: grid;
  grid-template-columns: minmax(0, 1fr) 30px;
  grid-template-rows: minmax(0, 1fr) 30px;
  padding: 4px 4px 2px;
  border: 2px solid #999;
  border-top-color: #666;
  background: #fff;
}
.tree { margin: 0; padding: 0; list-style: none; overflow: hidden; }
.row:first-child { margin-top: -29px; }
.row {
  display: flex;
  align-items: center;
  height: 34px;
  padding-left: 10px;
  white-space: nowrap;
  position: relative;
}
.l1 { padding-left: 60px; }
.l2 { padding-left: 110px; }
.node { flex: none; width: 32px; height: 30px; margin: 2px 8px 0 0; shape-rendering: crispEdges; }
.chev { position: absolute; left: 17px; top: 15px; width: 16px; height: 10px; }
.here { position: absolute; left: 42px; top: 11px; width: 14px; height: 14px; }
.vtrack {
  display: flex;
  flex-direction: column;
  justify-content: flex-end;
  align-items: center;
  padding-bottom: 2px;
  border: solid #e8e8e8;
  border-width: 0 2px;
  background: #fafafa;
}
.vthumb { width: 16px; height: 820px; border-radius: 8px; background: #c2c2c2; }
.htrack {
  display: flex;
  align-items: center;
  padding-left: 25px;
  border: solid #e8e8e8;
  border-width: 2px 0;
  background: #fafafa;
}
.hthumb { width: 84px; height: 16px; border-radius: 8px; background: #c2c2c2; }

.splitter { flex: none; width: 18px; display: flex; align-items: center; }
.knob {
  width: 18px;
  height: 20px;
  border: solid #ccc;
  border-width: 1px 0;
  background: radial-gradient(circle, #dedede 0 6px, #fff 7px);
}

/* output pane */
.viewer {
  flex: 1;
  min-width: 0;
  display: flex;
  border: 2px solid #c3c3c3;
  border-top-color: #666;
  border-bottom-color: #8e8e8e;
  background: #fff;
  padding: 2px 0 0 2px;
}
.report {
  flex: 1;
  min-width: 0;
  overflow: hidden;
  padding-left: 53px;
  border: solid #9acbe3;
  border-width: 2px 0 2px 2px;
}
.main-track { width: 32px; border: solid #9acbe3; border-width: 2px 2px 2px 0; box-shadow: inset 2px 0 #e8e8e8; }
.main-track .vthumb { height: 118px; }

.pivot { border-collapse: separate; border-spacing: 0; table-layout: fixed; width: 0; }
.scrolled { margin-top: -51px; }
.c-label { width: 320px; }
.c-stat { width: 265px; }
.c-wide { width: 192px; }
.c-narrow { width: 135px; }
.pivot caption {
  padding: 0 4px 15px 0;
  font-size: 31px;
  line-height: 36px;
  font-weight: 700;
  white-space: nowrap;
}
.pivot th, .pivot td { line-height: 26px; vertical-align: top; border-bottom: 2px solid #adadad; }
.pivot th { padding: 7px 40px 0 17px; font-weight: 400; text-align: left; color: #264a60; background: #e0e0e0; }
.pivot th.stat { padding: 9px 0 0 17px; white-space: nowrap; }
.pivot td {
  height: 42px;
  padding: 10px 23px 0 0;
  font-family: "DejaVu Sans", sans-serif;
  text-align: right;
}
.pivot td + td { border-left: 2px solid #dedede; }
.tall td { height: 70px; }
.pivot thead th {
  padding: 0 20px 7px 8px;
  vertical-align: bottom;
  text-align: center;
  background: #fff;
}
.pivot thead th + th { border-left: 2px solid #dedede; }
.pivot thead th, .pivot .corner, .pivot .end th, .pivot .end td, .pivot th.last { border-bottom-color: #152935; }
.short th { height: 70px; }
.high th { height: 126px; }
.pivot .high th { padding-bottom: 13px; }

.log { margin: 58px 0 54px 3px; font: 27px/34px "DejaVu Sans Mono", monospace; }
.heading { margin: 0 0 57px 3px; font-size: 37px; line-height: 42px; }
.item { position: relative; margin-bottom: 67px; }
.marker { position: absolute; left: -39px; top: 118px; width: 26px; height: 26px; }

/* status bar */
.status {
  flex: none;
  height: 47px;
  display: flex;
  gap: 2px;
  padding: 6px 4px 3px 10px;
  border-top: 2px solid #bbb;
  background: #ececec;
  font-size: 29px;
  line-height: 36px;
}
.cell { padding-left: 5px; border: solid #a0a0a0; border-width: 2px 0 0 1px; background: linear-gradient(#e8e8e8, #d8d8d8); white-space: nowrap; }
.grow { flex: 1; }
.s-proc { width: 526px; }
.s-a { width: 38px; }
.s-b { width: 62px; }
.s-uni { width: 184px; }
.s-end { width: 80px; }

/* dock */
.dock {
  flex: none;
  height: 104px;
  margin: 0 68px 10px;
  padding: 0 18px 6px 14px;
  display: flex;
  align-items: center;
  border: 2px solid rgba(255, 255, 255, .2);
  border-radius: 26px;
  background: linear-gradient(90deg, #5f7ba1 0, #6b7ba9 18%, #737bab 38%, #8078a6 55%, #8377a8 80%, #9c76a4 100%);
}
.apps { flex: 1; margin-right: 6px; display: flex; justify-content: space-between; }
.recent { display: flex; gap: 20px; }
.shelf { display: flex; align-items: center; gap: 8px; }
.bar { width: 2px; height: 76px; margin: 0 22px 0 28px; background: #5a4e88; }
.app { position: relative; width: 66px; height: 66px; }
.app svg { display: block; width: 66px; height: 66px; overflow: visible; }
.app .spss { width: 82px; height: 82px; margin: -8px; }
.on::after {
  content: "";
  position: absolute;
  left: 28px;
  top: 76px;
  width: 8px;
  height: 8px;
  border-radius: 50%;
  background: #04042c;
}
.badge {
  position: absolute;
  right: -9px;
  top: -9px;
  min-width: 30px;
  height: 30px;
  padding: 0 2px;
  border-radius: 15px;
  font: 18px/30px Inter, sans-serif;
  text-align: center;
  color: #fff;
  background: #e9503f;
}
.mini { width: 78px; height: 66px; }
.mini svg { display: block; width: 78px; height: 66px; overflow: visible; }
.trash { width: 58px; height: 80px; margin: -4px 0 0 8px; }
.trash svg { display: block; width: 58px; height: 80px; }

.t-letter { font: 700 20px Inter, sans-serif; fill: #fff; text-anchor: middle; }
.t-mini { font: 700 8px Inter, sans-serif; fill: #fff; text-anchor: middle; }
.t-cal-m { font: 600 14px Inter, sans-serif; fill: #fff; text-anchor: middle; }
.t-cal-d { font: 300 40px Inter, sans-serif; fill: #222; text-anchor: middle; }
.t-280 { font: 700 10px Inter, sans-serif; fill: #fff; text-anchor: middle; }
.t-tv { font: 500 28px Inter, sans-serif; fill: #fff; text-anchor: middle; }
.t-sigma { font: 64px "Liberation Serif", serif; fill: #fff; }
.t-alpha { font: 36px "Liberation Serif", serif; fill: #fff; }
.t-div { font: 30px "Liberation Serif", serif; fill: #fff; }
```
